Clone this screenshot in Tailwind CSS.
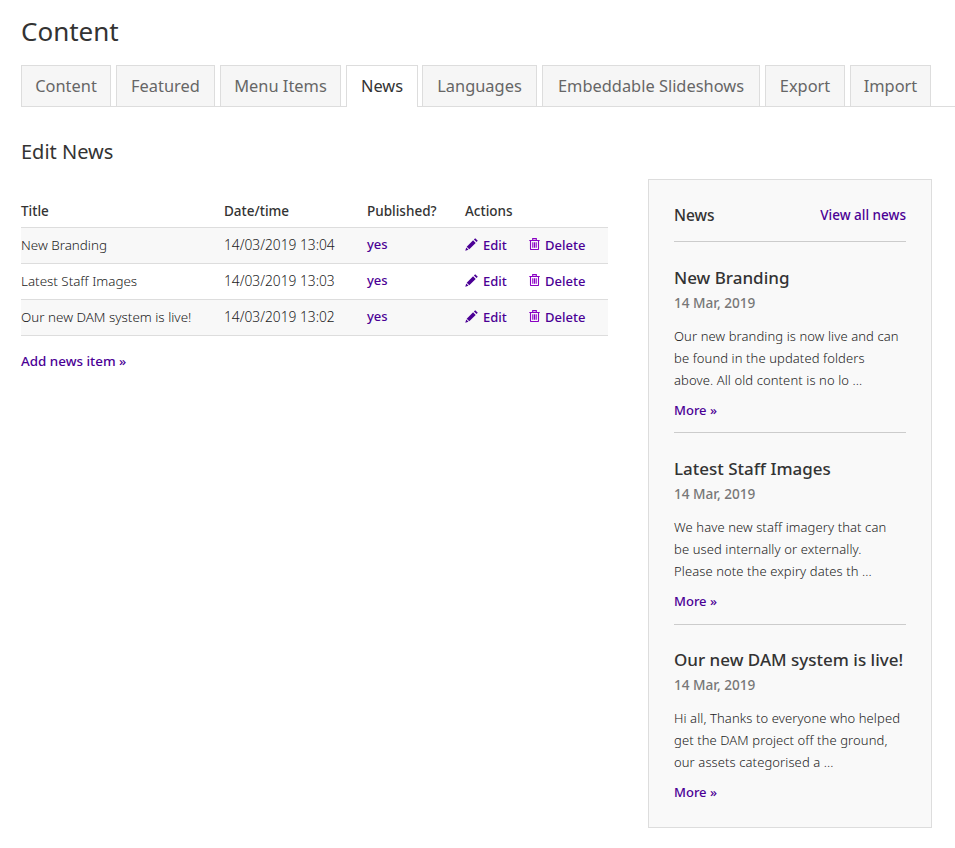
<!DOCTYPE html>
<html lang="en">
<head>
    <meta charset="UTF-8">
    <title>Content</title>
    <script src="https://cdn.jsdelivr.net/npm/@tailwindcss/browser@4"></script>
</head>
<body class="bg-white font-['Noto_Sans',sans-serif] text-[#333] overflow-hidden">
    <div class="h-[848px] pl-[21px] pt-[12px]">
        <h1 class="text-[26px] leading-[38px] font-[450] text-[#333] h-[53px]">Content</h1>

        <!-- tabs -->
        <div class="flex gap-[5px] h-[42px] border-b border-[#ddd] text-[16.4px] font-[450] text-[#666] box-border">
            <a class="w-[90px] h-[42px] flex items-center justify-center bg-[#f6f6f6] border border-[#ddd]">Content</a>
            <a class="w-[99px] h-[42px] flex items-center justify-center bg-[#f6f6f6] border border-[#ddd]">Featured</a>
            <a class="w-[121px] h-[42px] flex items-center justify-center bg-[#f6f6f6] border border-[#ddd]">Menu Items</a>
            <a class="w-[72px] h-[42px] flex items-center justify-center bg-white border border-b-0 border-[#ddd] text-[#333]">News</a>
            <a class="w-[115px] h-[42px] -ml-[1px] flex items-center justify-center bg-[#f6f6f6] border border-[#ddd]">Languages</a>
            <a class="w-[218px] h-[42px] flex items-center justify-center bg-[#f6f6f6] border border-[#ddd]">Embeddable Slideshows</a>
            <a class="w-[80px] h-[42px] flex items-center justify-center bg-[#f6f6f6] border border-[#ddd]">Export</a>
            <a class="w-[81px] h-[42px] flex items-center justify-center bg-[#f6f6f6] border border-[#ddd]">Import</a>
        </div>

        <div class="flex">
            <!-- left column -->
            <div class="w-[587px]">
                <h2 class="text-[20px] leading-[28px] mt-[31px] font-[450]">Edit News</h2>
                <table class="w-[587px] mt-[25px] text-[13px] table-fixed border-collapse">
                    <thead>
                        <tr class="h-[36px] border-b border-[#ddd] text-left text-[13.5px]">
                            <th class="w-[203px] font-medium pt-[4px]">Title</th>
                            <th class="w-[143px] font-medium pt-[4px]">Date/time</th>
                            <th class="w-[98px] font-medium pt-[4px]">Published?</th>
                            <th class="font-medium pt-[4px]">Actions</th>
                        </tr>
                    </thead>
                    <tbody>
                        <tr class="h-[36px] border-b border-[#ddd] bg-[#f8f8f8]">
                            <td class="text-[#222] font-light text-[13.4px]">New Branding</td>
                            <td class="text-[#222] font-light text-[13.75px]">14/03/2019 13:04</td>
                            <td class="text-[#4b0095] font-medium">yes</td>
                            <td>
                                <div class="flex text-[#4b0095] font-medium pt-[1px]">
                                    <a class="w-[64px] flex items-center gap-[5px]">
                                        <svg class="w-[13px] h-[13px] -mt-[3px]" viewBox="0 0 13 13" fill="currentColor"><path d="M10.2.2 12.8 2.8 11.5 4.1 8.9 1.5ZM8.1 2.3 10.7 4.9 4.3 11.3 1.7 8.7ZM1.2 9.5 3.5 11.8.3 12.7Z"/></svg>
                                        Edit
                                    </a>
                                    <a class="flex items-center gap-[5px]">
                                        <svg class="w-[11px] h-[12px] -mt-[4px] text-[#8a00c4]" viewBox="0 0 11 12" fill="none" stroke="currentColor" stroke-width="1.1"><path d="M.3 2.5h10.4M3.7 2.5V.6h3.6v1.9M1.5 2.5v8.4a.6.6 0 0 0 .6.6h6.8a.6.6 0 0 0 .6-.6V2.5M3.8 4.3v5.4M5.5 4.3v5.4M7.2 4.3v5.4"/></svg>
                                        Delete
                                    </a>
                                </div>
                            </td>
                        </tr>
                        <tr class="h-[36px] border-b border-[#ddd]">
                            <td class="text-[#222] font-light text-[13.4px]">Latest Staff Images</td>
                            <td class="text-[#222] font-light text-[13.75px]">14/03/2019 13:03</td>
                            <td class="text-[#4b0095] font-medium">yes</td>
                            <td>
                                <div class="flex text-[#4b0095] font-medium pt-[1px]">
                                    <a class="w-[64px] flex items-center gap-[5px]">
                                        <svg class="w-[13px] h-[13px] -mt-[3px]" viewBox="0 0 13 13" fill="currentColor"><path d="M10.2.2 12.8 2.8 11.5 4.1 8.9 1.5ZM8.1 2.3 10.7 4.9 4.3 11.3 1.7 8.7ZM1.2 9.5 3.5 11.8.3 12.7Z"/></svg>
                                        Edit
                                    </a>
                                    <a class="flex items-center gap-[5px]">
                                        <svg class="w-[11px] h-[12px] -mt-[4px] text-[#8a00c4]" viewBox="0 0 11 12" fill="none" stroke="currentColor" stroke-width="1.1"><path d="M.3 2.5h10.4M3.7 2.5V.6h3.6v1.9M1.5 2.5v8.4a.6.6 0 0 0 .6.6h6.8a.6.6 0 0 0 .6-.6V2.5M3.8 4.3v5.4M5.5 4.3v5.4M7.2 4.3v5.4"/></svg>
                                        Delete
                                    </a>
                                </div>
                            </td>
                        </tr>
                        <tr class="h-[36px] border-b border-[#ddd] bg-[#f8f8f8]">
                            <td class="text-[#222] font-light text-[13.4px]">Our new DAM system is live!</td>
                            <td class="text-[#222] font-light text-[13.75px]">14/03/2019 13:02</td>
                            <td class="text-[#4b0095] font-medium">yes</td>
                            <td>
                                <div class="flex text-[#4b0095] font-medium pt-[1px]">
                                    <a class="w-[64px] flex items-center gap-[5px]">
                                        <svg class="w-[13px] h-[13px] -mt-[3px]" viewBox="0 0 13 13" fill="currentColor"><path d="M10.2.2 12.8 2.8 11.5 4.1 8.9 1.5ZM8.1 2.3 10.7 4.9 4.3 11.3 1.7 8.7ZM1.2 9.5 3.5 11.8.3 12.7Z"/></svg>
                                        Edit
                                    </a>
                                    <a class="flex items-center gap-[5px]">
                                        <svg class="w-[11px] h-[12px] -mt-[4px] text-[#8a00c4]" viewBox="0 0 11 12" fill="none" stroke="currentColor" stroke-width="1.1"><path d="M.3 2.5h10.4M3.7 2.5V.6h3.6v1.9M1.5 2.5v8.4a.6.6 0 0 0 .6.6h6.8a.6.6 0 0 0 .6-.6V2.5M3.8 4.3v5.4M5.5 4.3v5.4M7.2 4.3v5.4"/></svg>
                                        Delete
                                    </a>
                                </div>
                            </td>
                        </tr>
                    </tbody>
                </table>
                <a class="block mt-[15px] text-[13.4px] leading-[20px] text-[#4b0095] font-medium">Add news item »</a>
            </div>

            <!-- news sidebar -->
            <div class="w-[284px] h-[649px] ml-[40px] mt-[72px] bg-[#f9f9f9] border border-[#ddd] px-[25px]">
                <div class="flex justify-between items-center h-[62px] pt-[10px] border-b border-[#ccc]">
                    <span class="text-[15.5px] font-medium">News</span>
                    <a class="text-[13.5px] text-[#4b0095] font-medium">View all news</a>
                </div>

                <div class="h-[191px] border-b border-[#ccc] pt-[23px]">
                    <h3 class="text-[17px] leading-[26px] font-medium">New Branding</h3>
                    <p class="text-[13.6px] leading-[22px] mt-[1px] text-[#777] font-medium">14 Mar, 2019</p>
                    <p class="text-[13px] text-[#222] tracking-[0.1px] leading-[22px] mt-[11px] font-light">Our new branding is now live and can<br>be found in the updated folders<br>above. All old content is no lo ...</p>
                    <a class="block mt-[8px] text-[13px] leading-[22px] text-[#4b0095] font-medium">More »</a>
                </div>

                <div class="h-[192px] border-b border-[#ccc] pt-[23px]">
                    <h3 class="text-[17px] leading-[26px] font-medium">Latest Staff Images</h3>
                    <p class="text-[13.6px] leading-[22px] mt-[1px] text-[#777] font-medium">14 Mar, 2019</p>
                    <p class="text-[13px] text-[#222] tracking-[0.1px] leading-[22px] mt-[11px] font-light">We have new staff imagery that can<br>be used internally or externally.<br>Please note the expiry dates th ...</p>
                    <a class="block mt-[8px] text-[13px] leading-[22px] text-[#4b0095] font-medium">More »</a>
                </div>

                <div class="pt-[22px]">
                    <h3 class="text-[17px] leading-[26px] font-medium">Our new DAM system is live!</h3>
                    <p class="text-[13.6px] leading-[22px] mt-[1px] text-[#777] font-medium">14 Mar, 2019</p>
                    <p class="text-[13px] text-[#222] tracking-[0.1px] leading-[22px] mt-[11px] font-light">Hi all, Thanks to everyone who helped<br>get the DAM project off the ground,<br>our assets categorised a ...</p>
                    <a class="block mt-[8px] text-[13px] leading-[22px] text-[#4b0095] font-medium">More »</a>
                </div>
            </div>
        </div>
    </div>
</body>
</html>
